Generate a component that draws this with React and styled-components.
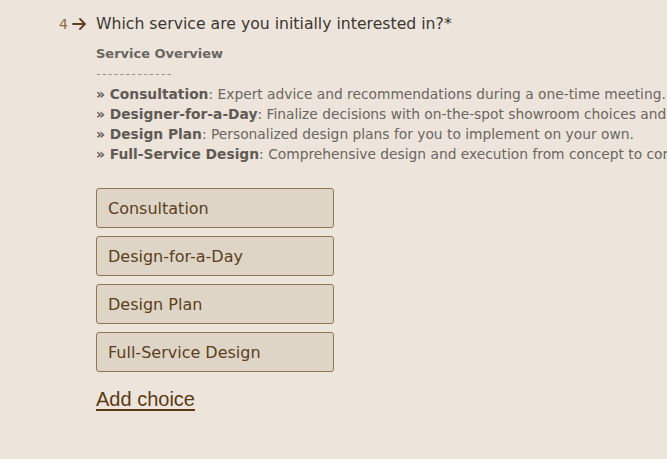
import React from "react";
import styled, { createGlobalStyle } from "styled-components";

const Global = createGlobalStyle`
  html, body { margin: 0; padding: 0; background: #ede5db; overflow: hidden; }
  body { font-family: "DejaVu Sans", "Open Sans", sans-serif; }
`;

const Page = styled.div`
  width: 667px;
  height: 459px;
  overflow: hidden;
  background: #ede5db;
  display: grid;
  grid-template-columns: 96px auto;
  padding-top: 12px;
  box-sizing: border-box;
`;

const Marker = styled.div`
  display: flex;
  justify-content: flex-end;
  align-items: center;
  gap: 4px;
  height: 24px;
  padding-right: 10px;
  color: #8a6b45;
  font-size: 14px;
`;

const Body = styled.div`
  display: flex;
  flex-direction: column;
  min-width: 0;
`;

const Question = styled.h1`
  margin: 0;
  font-size: 15.7px;
  font-weight: 400;
  line-height: 24px;
  color: #3b3733;
  white-space: nowrap;
`;

const Overview = styled.div`
  margin-top: 8px;
  color: #6b6661;
  font-size: 13.8px;
  line-height: 20px;
  white-space: nowrap;
`;

const Heading = styled.div`
  font-weight: 700;
  font-size: 13px;
`;

const Line = styled.div`
  b { font-weight: 700; color: #5f5a55; }
`;

const Dashes = styled.div`
  color: #9a948e;
  font-size: 13px;
  letter-spacing: 1.2px;
`;

const Choices = styled.div`
  display: flex;
  flex-direction: column;
  gap: 8px;
  margin-top: 24px;
`;

const Choice = styled.div`
  width: 238px;
  height: 40px;
  box-sizing: border-box;
  display: flex;
  align-items: center;
  padding: 0 11px;
  background: #ded5c7;
  border: 1px solid #8d7556;
  border-radius: 3px;
  color: #5b3f1d;
  font-size: 16px;
`;

const AddChoice = styled.a`
  align-self: flex-start;
  margin-top: 15px;
  font-family: "Liberation Sans", Arial, sans-serif;
  font-size: 20px;
  color: #5a3a14;
  text-decoration: underline;
  text-decoration-thickness: 2px;
  text-underline-offset: 3px;
  line-height: 24px;
  cursor: pointer;
`;

const items = [
  ["Consultation", "Expert advice and recommendations during a one-time meeting."],
  ["Designer-for-a-Day", "Finalize decisions with on-the-spot showroom choices and expert guidance."],
  ["Design Plan", "Personalized design plans for you to implement on your own."],
  ["Full-Service Design", "Comprehensive design and execution from concept to completion."],
];

const choices = ["Consultation", "Design-for-a-Day", "Design Plan", "Full-Service Design"];

export default function App() {
  return (
    <>
      <Global />
      <Page>
        <Marker>
          <span>4</span>
          <svg width="14" height="12" viewBox="0 0 14 12" fill="none" stroke="#5e4121" strokeWidth="1.8" strokeLinecap="round" strokeLinejoin="round">
            <path d="M1 6h12M8 1l5 5-5 5" />
          </svg>
        </Marker>
        <Body>
          <Question>Which service are you initially interested in?*</Question>
          <Overview>
            <Heading>Service Overview</Heading>
            <Dashes>-------------</Dashes>
            {items.map(([t, d]) => (
              <Line key={t}>
                <b>» {t}</b>: {d}
              </Line>
            ))}
          </Overview>
          <Choices>
            {choices.map((c) => (
              <Choice key={c}>{c}</Choice>
            ))}
          </Choices>
          <AddChoice>Add choice</AddChoice>
        </Body>
      </Page>
    </>
  );
}
